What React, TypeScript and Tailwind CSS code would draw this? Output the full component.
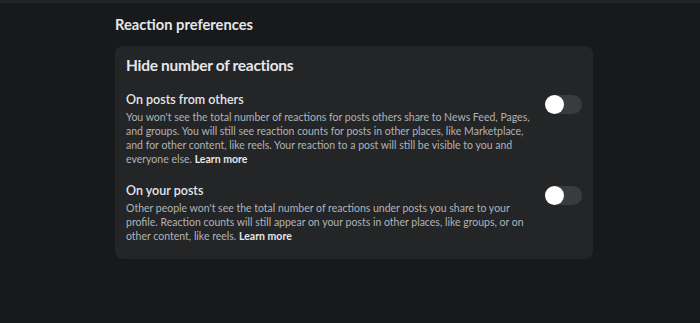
import { useState } from 'react'

function Toggle({ on, onClick }: { on: boolean; onClick: () => void }) {
    return (
        <button
            onClick={onClick}
            className={on
                ? 'relative mt-[4px] h-[19px] w-[37px] shrink-0 rounded-full bg-[#2d88ff]'
                : 'relative mt-[4px] h-[19px] w-[37px] shrink-0 rounded-full bg-[#3a3b3c]'}
        >
            <span
                className={on
                    ? 'absolute left-[18px] top-0 h-[19px] w-[19px] rounded-full bg-white'
                    : 'absolute left-0 top-0 h-[19px] w-[19px] rounded-full bg-white'}
            />
        </button>
    )
}

function Option({ title, text }: { title: string; text: string }) {
    const [on, setOn] = useState(false)

    return (
        <div className="flex items-start justify-between gap-3" >
            <div className="w-[412px]" >
                <h3 className="text-[12.5px] leading-[18px] font-semibold text-[#e4e6eb]" >{title}</h3>
                <p className="mt-[1px] text-[10.5px] leading-[14px] text-[#b0b3b8]" >
                    {text} <a href="#" className="font-bold text-[#e4e6eb]" >Learn more</a>
                </p>
            </div>
            <Toggle on={on} onClick={() => setOn(!on)} />
        </div>
    )
}

export default function App() {
    return (
        <div className="min-h-[323px] bg-[#18191a] font-['Lato','Liberation_Sans',sans-serif]" >
            <div className="h-[3px] bg-[#242526]" />
            <div className="w-[478px] ml-[115px] pt-[12px]" >
                <h2 className="text-[14.7px] leading-[18px] font-bold text-[#e4e6eb]" >Reaction preferences</h2>
                <div className="mt-[13px] rounded-lg bg-[#242526] px-[11px] pt-[9px] pb-[16px]" >
                    <h3 className="text-[15.5px] leading-[20px] font-bold tracking-[-0.3px] text-[#e4e6eb]" >Hide number of reactions</h3>
                    <div className="mt-[16px] flex flex-col gap-[16px]" >
                        <Option
                            title="On posts from others"
                            text="You won't see the total number of reactions for posts others share to News Feed, Pages, and groups. You will still see reaction counts for posts in other places, like Marketplace, and for other content, like reels. Your reaction to a post will still be visible to you and everyone else."
                        />
                        <Option
                            title="On your posts"
                            text="Other people won't see the total number of reactions under posts you share to your profile. Reaction counts will still appear on your posts in other places, like groups, or on other content, like reels."
                        />
                    </div>
                </div>
            </div>
        </div>
    )
}
